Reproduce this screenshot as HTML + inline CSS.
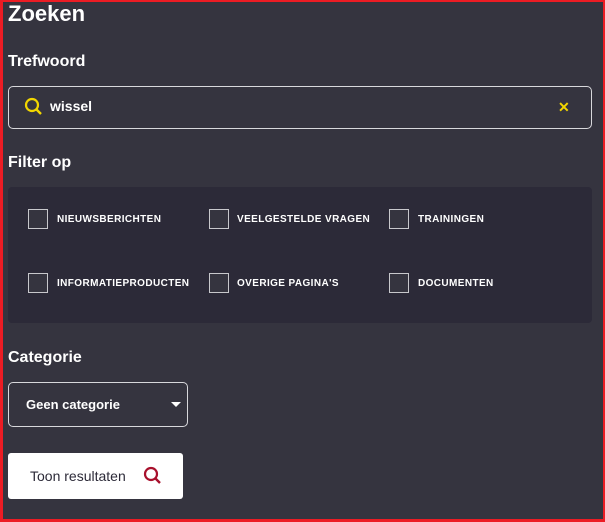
<!DOCTYPE html>
<html><head><style>
*{margin:0;padding:0;box-sizing:border-box}
html,body{width:605px;height:522px;overflow:hidden}
body{background:#ec1c24;font-family:"Liberation Sans",sans-serif;color:#fff;position:relative}
.bg{position:absolute;left:3px;top:2px;width:600px;height:517px;background:#35343f}
.a{position:absolute}
h1{position:absolute;left:8px;top:1px;font-size:22px;font-weight:bold}
.h{font-size:16px;font-weight:bold}
.inp{left:8px;top:86px;width:584px;height:43px;border:1.5px solid #d8d8dc;border-radius:5px}
.panel{left:8px;top:187px;width:584px;height:136px;background:#2c2a38;border-radius:4px}
.cb{position:absolute;width:20px;height:20px;border:1.5px solid #c8c8cc;background:#35343f}
.lb{position:absolute;font-size:10px;font-weight:bold;letter-spacing:0.4px}
.sel{left:8px;top:382px;width:180px;height:45px;border:1.5px solid #d8d8dc;border-radius:5px}
.btn{left:8px;top:453px;width:175px;height:46px;background:#fff;border-radius:3px;color:#2c2a38}
</style></head><body>
<div class="bg"></div>
<h1>Zoeken</h1>
<div class="a h" style="left:8px;top:53px">Trefwoord</div>
<div class="a inp"></div>
<svg class="a" style="left:24px;top:97px" width="20" height="20" viewBox="0 0 20 20"><circle cx="8" cy="8" r="6" fill="none" stroke="#f2d600" stroke-width="2.2"/><line x1="12.5" y1="12.5" x2="17" y2="17" stroke="#f2d600" stroke-width="2.4"/></svg>
<div class="a" style="left:50px;top:98px;font-size:14px;font-weight:bold">wissel</div>
<div class="a" style="left:558px;top:99px;color:#f2d600;font-size:14px;font-weight:bold">✕</div>
<div class="a h" style="left:8px;top:154px">Filter op</div>
<div class="a panel"></div>
<div class="cb" style="left:28px;top:209px"></div><div class="lb" style="left:57px;top:214px">NIEUWSBERICHTEN</div>
<div class="cb" style="left:209px;top:209px"></div><div class="lb" style="left:237px;top:214px">VEELGESTELDE VRAGEN</div>
<div class="cb" style="left:389px;top:209px"></div><div class="lb" style="left:418px;top:214px">TRAININGEN</div>
<div class="cb" style="left:28px;top:273px"></div><div class="lb" style="left:57px;top:278px">INFORMATIEPRODUCTEN</div>
<div class="cb" style="left:209px;top:273px"></div><div class="lb" style="left:237px;top:278px">OVERIGE PAGINA'S</div>
<div class="cb" style="left:389px;top:273px"></div><div class="lb" style="left:418px;top:278px">DOCUMENTEN</div>
<div class="a h" style="left:8px;top:349px">Categorie</div>
<div class="a sel"></div>
<div class="a" style="left:26px;top:397px;font-size:13px;font-weight:bold">Geen categorie</div>
<div class="a" style="left:171px;top:402px;width:0;height:0;border-left:5px solid transparent;border-right:5px solid transparent;border-top:5px solid #fff"></div>
<div class="a btn"></div>
<div class="a" style="left:30px;top:468px;font-size:14px;color:#2c2a38">Toon resultaten</div>
<svg class="a" style="left:143px;top:466px" width="20" height="20" viewBox="0 0 20 20"><circle cx="8" cy="8" r="6" fill="none" stroke="#a8102c" stroke-width="2.2"/><line x1="12.5" y1="12.5" x2="17" y2="17" stroke="#a8102c" stroke-width="2.4"/></svg>
</body></html>
